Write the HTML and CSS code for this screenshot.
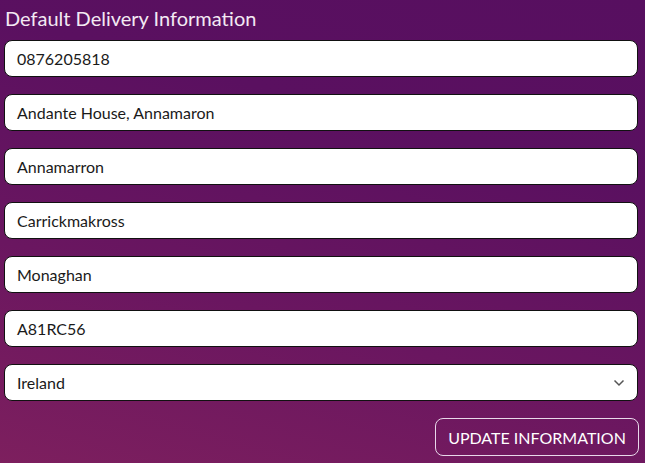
FILE: index.html
```
<!DOCTYPE html>
<html>
<head>
<meta charset="utf-8">
<link rel="stylesheet" href="styles.css">
</head>
<body>
<div class="page">
  <h2 class="title">Default Delivery Information</h2>
  <form class="form">
    <div class="field">0876205818</div>
    <div class="field">Andante House, Annamaron</div>
    <div class="field">Annamarron</div>
    <div class="field">Carrickmakross</div>
    <div class="field">Monaghan</div>
    <div class="field">A81RC56</div>
    <div class="field select">
      <span>Ireland</span>
      <svg class="chev" width="12" height="8" viewBox="0 0 12 8"><path d="M1.5 1.5 L6 6 L10.5 1.5" fill="none" stroke="#555" stroke-width="1.5"/></svg>
    </div>
    <div class="actions">
      <button type="button" class="btn">UPDATE INFORMATION</button>
    </div>
  </form>
</div>
</body>
</html>
```
FILE: styles.css
```
html, body {
  margin: 0;
  padding: 0;
}
body {
  width: 645px;
  height: 463px;
  overflow: hidden;
  background: linear-gradient(15deg, #7d1f5e 0%, #6a1660 35%, #5a1060 70%, #570f60 100%);
  font-family: Lato, "Noto Sans", sans-serif;
}
.page {
  padding: 0 7px 0 4px;
}
.title {
  margin: 0;
  padding: 5px 0 0 1px;
  height: 40px;
  box-sizing: border-box;
  font-size: 20px;
  font-weight: 400;
  color: #f3e9f3;
  line-height: 26px;
}
.form {
  display: flex;
  flex-direction: column;
  gap: 17px;
}
.field {
  height: 37px;
  box-sizing: border-box;
  background: #fff;
  border: 1px solid #111;
  border-radius: 8px;
  padding: 0 12px;
  display: flex;
  align-items: center;
  font-size: 16px;
  color: #1a1a1a;
}
.select {
  justify-content: space-between;
  padding-right: 12px;
}
.chev {
  display: block;
}
.actions {
  display: flex;
  justify-content: flex-end;
  margin-right: -1px;
}
.btn {
  height: 38px;
  width: 204px;
  box-sizing: border-box;
  background: transparent;
  border: 1px solid #e8d8ea;
  border-radius: 8px;
  color: #fff;
  font-family: Lato, "Noto Sans", sans-serif;
  font-size: 16px;
  padding: 0;
}
```
